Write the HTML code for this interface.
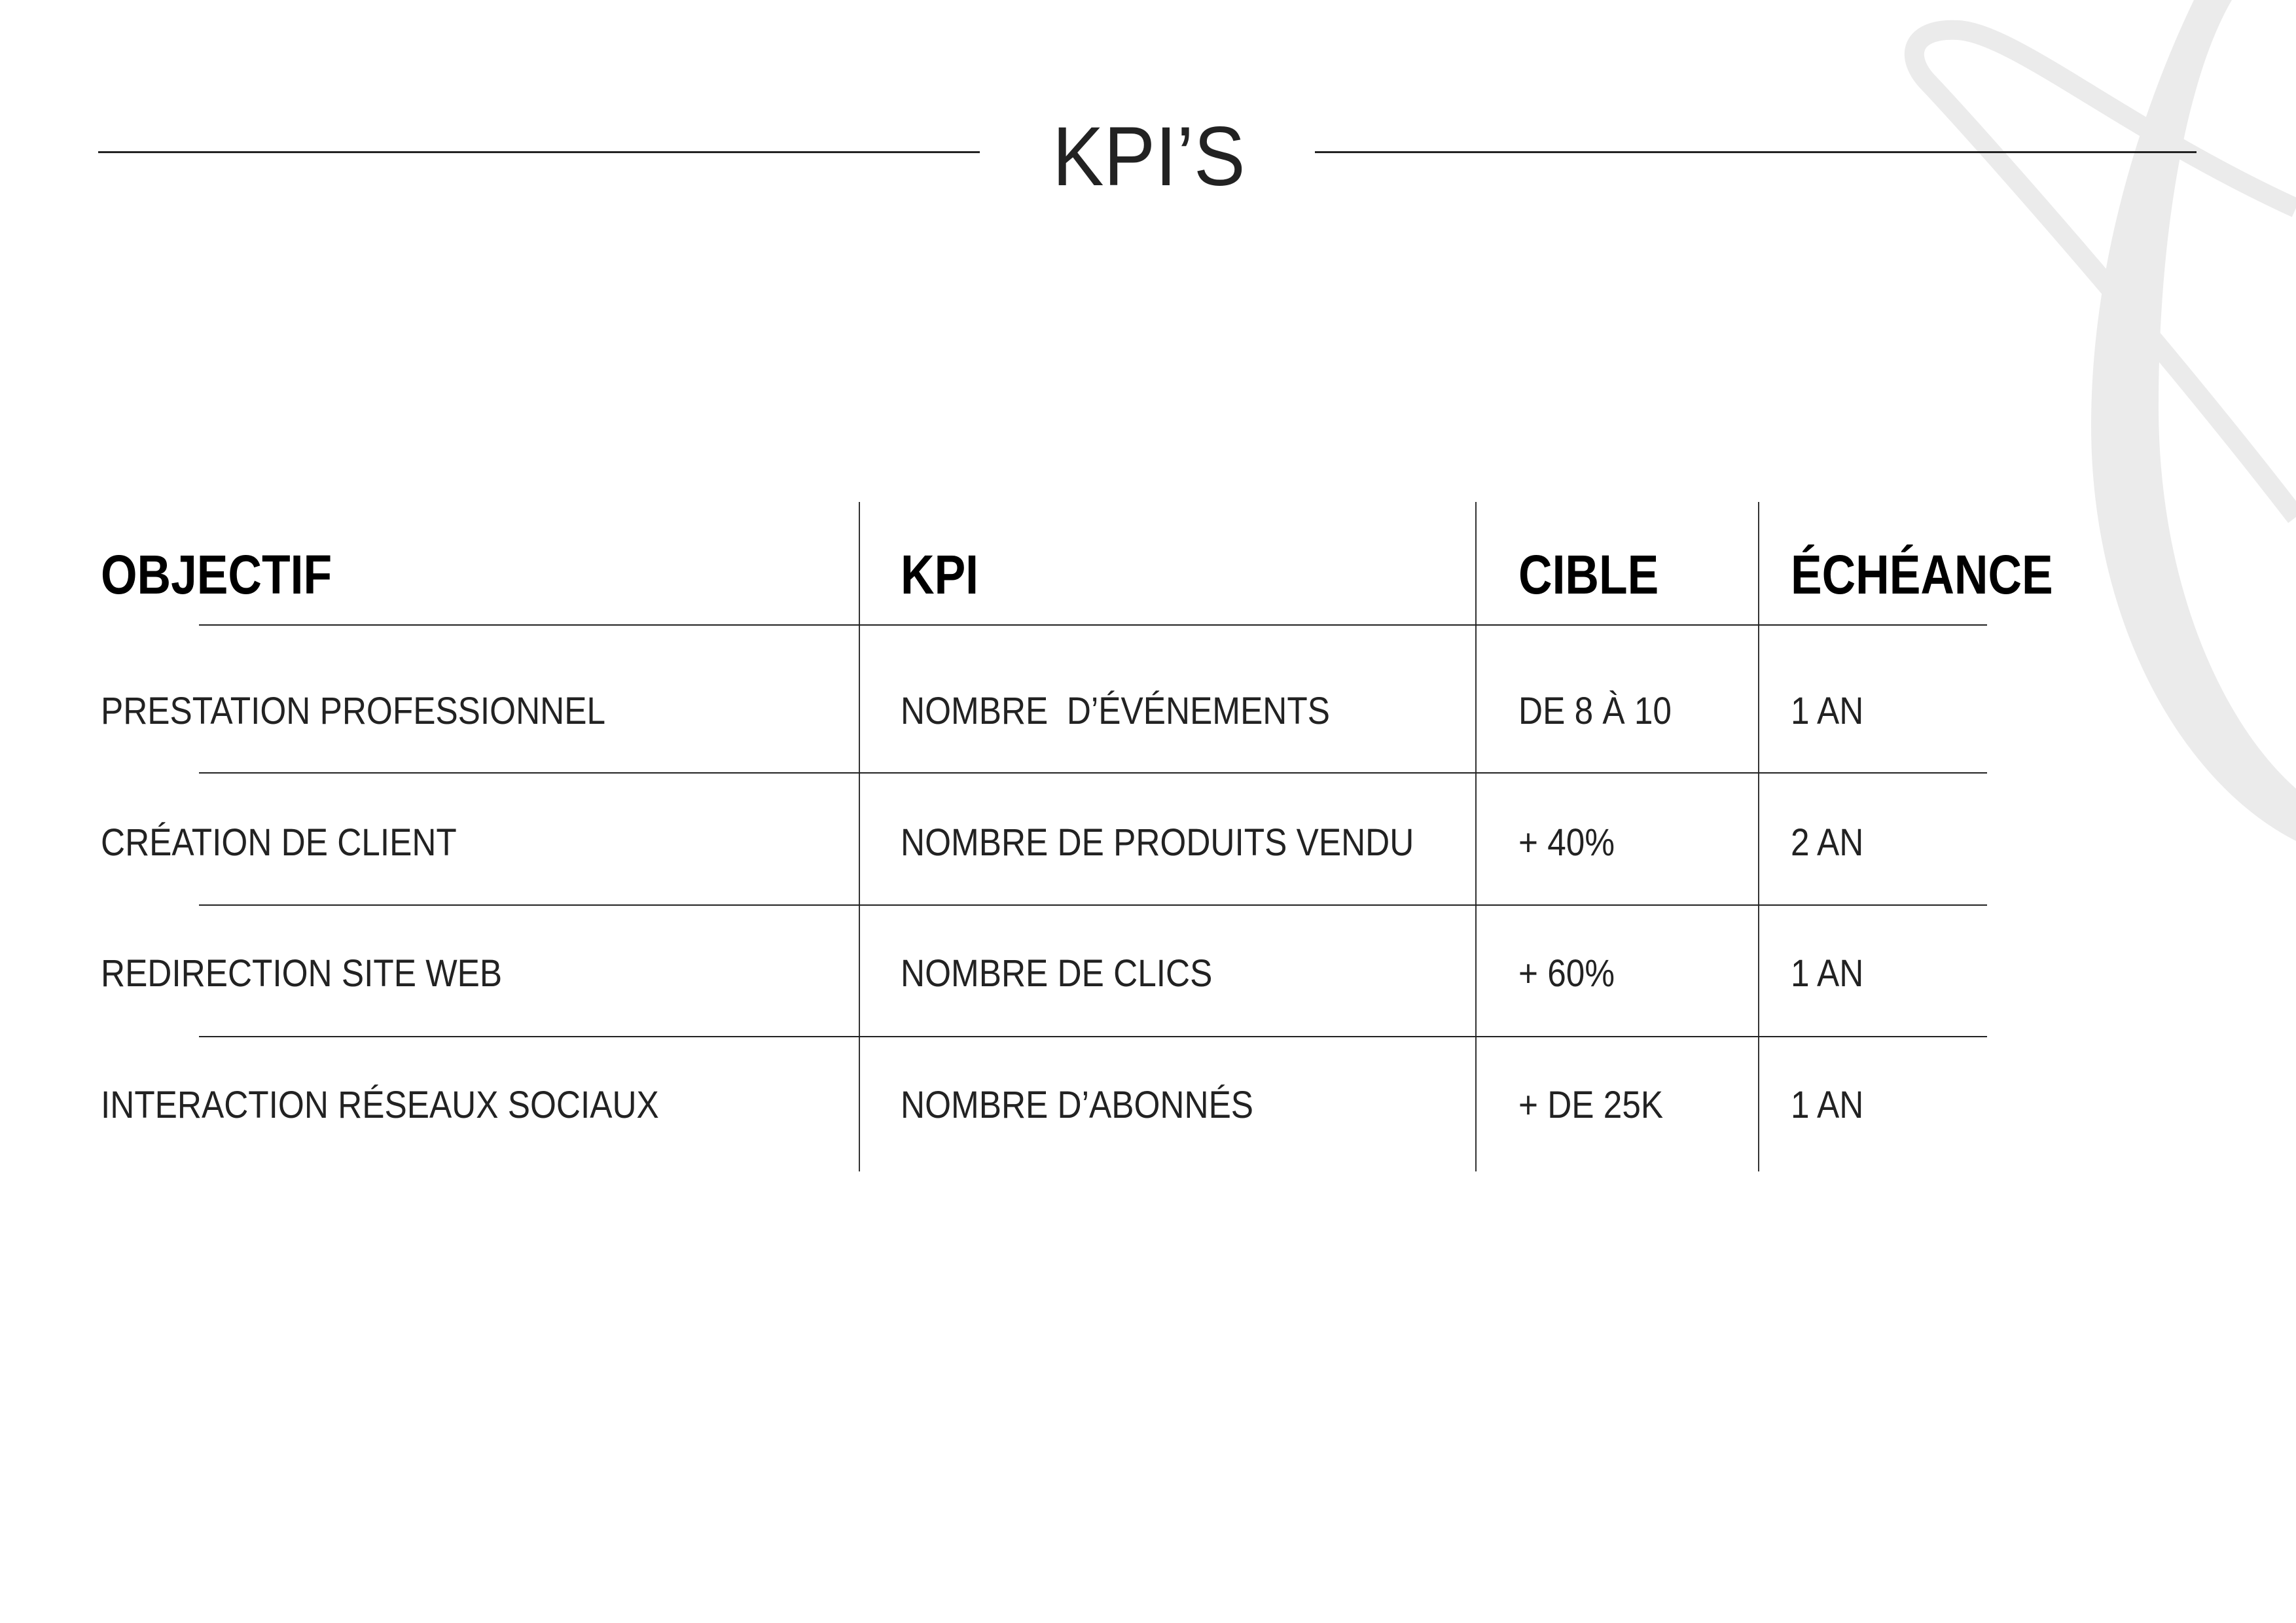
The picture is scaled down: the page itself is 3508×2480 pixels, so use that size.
<!DOCTYPE html>
<html><head><meta charset="utf-8"><style>
html,body{margin:0;padding:0;background:#fff}
#p{position:relative;width:3508px;height:2480px;overflow:hidden;background:#fff;font-family:"Liberation Sans",sans-serif;color:#111}
.hl{position:absolute;height:3px;background:#222}
.vl{position:absolute;width:2px;background:#333;top:767px;height:1023px}
.t{position:absolute;white-space:nowrap;line-height:1;transform-origin:0 0}
.h{font-weight:bold;font-size:84px;color:#000;transform:scaleX(0.85)}
.b{font-size:58px;color:#222;transform:scaleX(0.885)}
</style></head><body><div id="p">
<svg style="position:absolute;left:0;top:0" width="3508" height="2480">
<path d="M3508,318 C3250,200 3080,52 2992,46 C2918,42 2908,88 2948,128 C3030,215 3300,520 3508,790" fill="none" stroke="#ebebeb" stroke-width="30"/>
<path d="M3352,0 L3410,0 C3340,120 3298,360 3298,620 C3298,900 3400,1110 3508,1205 L3508,1285 C3340,1200 3195,960 3195,650 C3195,400 3275,160 3352,0 Z" fill="#ebebeb"/>
</svg>
<div class="hl" style="left:150px;top:231px;width:1347px"></div>
<div class="hl" style="left:2009px;top:231px;width:1347px"></div>
<div class="t" style="left:1608px;top:176px;font-size:128px;color:#222;transform:scaleX(0.92)">KPI’S</div>

<div class="vl" style="left:1312px"></div>
<div class="vl" style="left:2254px"></div>
<div class="vl" style="left:2686px"></div>
<div class="hl" style="left:304px;top:954px;width:2732px;height:2px"></div>
<div class="hl" style="left:304px;top:1180px;width:2732px;height:2px"></div>
<div class="hl" style="left:304px;top:1382px;width:2732px;height:2px"></div>
<div class="hl" style="left:304px;top:1583px;width:2732px;height:2px"></div>

<div class="t h" style="left:154px;top:836px">OBJECTIF</div>
<div class="t h" style="left:1376px;top:836px">KPI</div>
<div class="t h" style="left:2320px;top:836px">CIBLE</div>
<div class="t h" style="left:2736px;top:836px">ÉCHÉANCE</div>

<div class="t b" style="left:154px;top:1058px">PRESTATION PROFESSIONNEL</div>
<div class="t b" style="left:1376px;top:1058px">NOMBRE&nbsp; D’ÉVÉNEMENTS</div>
<div class="t b" style="left:2320px;top:1058px">DE 8 À 10</div>
<div class="t b" style="left:2736px;top:1058px">1 AN</div>

<div class="t b" style="left:154px;top:1259px">CRÉATION DE CLIENT</div>
<div class="t b" style="left:1376px;top:1259px">NOMBRE DE PRODUITS VENDU</div>
<div class="t b" style="left:2320px;top:1259px">+ 40%</div>
<div class="t b" style="left:2736px;top:1259px">2 AN</div>

<div class="t b" style="left:154px;top:1459px">REDIRECTION SITE WEB</div>
<div class="t b" style="left:1376px;top:1459px">NOMBRE DE CLICS</div>
<div class="t b" style="left:2320px;top:1459px">+ 60%</div>
<div class="t b" style="left:2736px;top:1459px">1 AN</div>

<div class="t b" style="left:154px;top:1660px">INTERACTION RÉSEAUX SOCIAUX</div>
<div class="t b" style="left:1376px;top:1660px">NOMBRE D’ABONNÉS</div>
<div class="t b" style="left:2320px;top:1660px">+ DE 25K</div>
<div class="t b" style="left:2736px;top:1660px">1 AN</div>
</div></body></html>
